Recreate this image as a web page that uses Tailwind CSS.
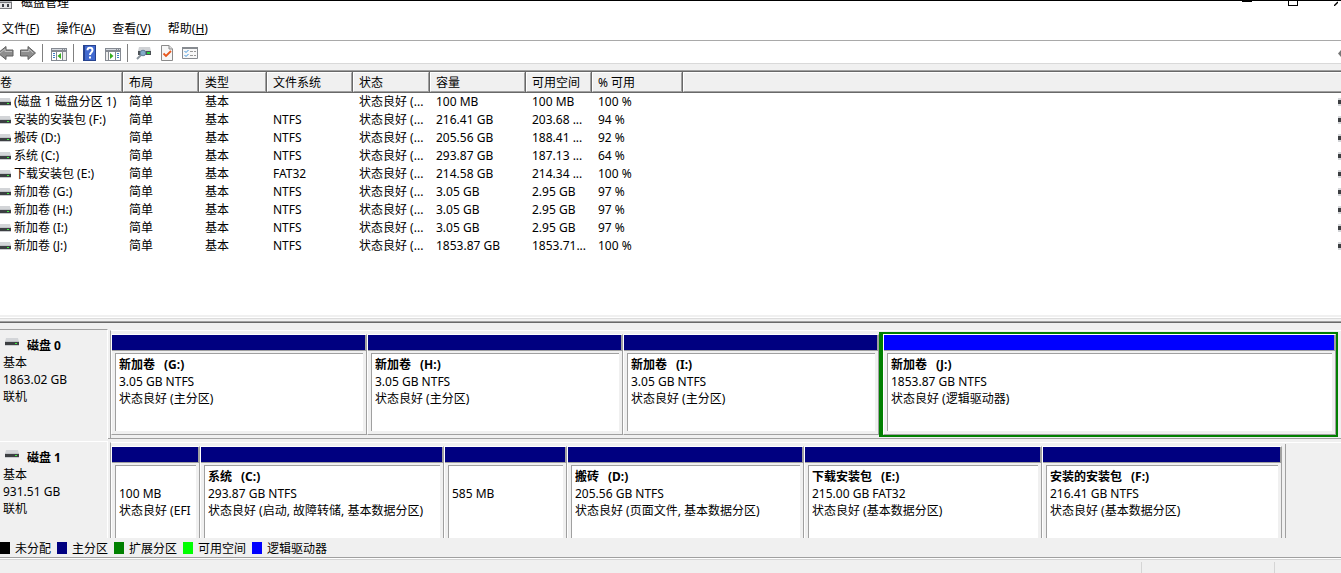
<!DOCTYPE html>
<html lang="zh-CN">
<head>
<meta charset="utf-8">
<title>磁盘管理</title>
<script src="https://cdn.jsdelivr.net/npm/@tailwindcss/browser@4"></script>
</head>
<body class="flex h-screen flex-col overflow-hidden bg-white font-['Noto_Sans','Noto_Sans_CJK_SC',sans-serif] text-[12px] leading-[17px] text-black">
<svg class="hidden" aria-hidden="true">
  <symbol id="drive" viewBox="0 0 14 8">
    <path d="M1 0h12l1 4H0z" fill="#d3d5d8"/><path d="M0 3h14v1H0z" fill="#bfc2c6"/>
    <path d="M0 4h14v3H0z" fill="#3c3f42"/><path d="M0 7h14v1H0z" fill="#c9cbce"/><path d="M10 5h2v1h-2z" fill="#3df03d"/>
  </symbol>
</svg>

<header class="flex h-[17px] shrink-0 items-start overflow-hidden border-t border-black">
  <svg class="h-2 w-3 shrink-0" viewBox="0 0 12 8" aria-hidden="true"><path d="M0 0h14v3H0z" fill="#b9bcc0"/><path d="M0 1h12v7H0z" fill="#77787c"/><path d="M0 2h11v5H0z" fill="#e4e4e6"/><path d="M2 3h2v3H2zM7 3h2v3H7z" fill="#3c3f46"/></svg>
  <h1 class="-mt-[7px] ml-[9px] grow">磁盘管理</h1>
  <button aria-label="最小化" class="mr-9 h-px w-[10px] bg-black"></button>
  <button aria-label="最大化" class="mr-9 h-[5px] w-[10px] border border-t-0 border-black"></button>
  <button aria-label="关闭" class="mr-[3px]"><svg class="h-[5px] w-[4px]" viewBox="0 0 4 5"><path d="M0 5L4 1" stroke="#000" stroke-width="1.3"/></svg></button>
</header>

<nav class="flex h-6 shrink-0 items-center gap-[17px] border-b border-[#a9a9a9] pl-[2px]">
  <button>文件(<u>F</u>)</button><button>操作(<u>A</u>)</button><button>查看(<u>V</u>)</button><button>帮助(<u>H</u>)</button>
</nav>

<div class="flex h-[23px] shrink-0 items-center border-b border-[#d9d9d9] pt-[2px]">
  <button aria-label="后退"><svg class="block h-4 w-[14px]" viewBox="0 0 14 16"><path d="M-2 8L6 1.5V5H13V11H6V14.500z" fill="#8e8e8e" stroke="#5f5f5f"/><path d="M0 8L5 4V6.500H12" fill="none" stroke="#bdbdbd"/></svg></button>
  <button aria-label="前进" class="ml-[6px]"><svg class="block h-4 w-4" viewBox="0 0 16 16"><path d="M.5 5H8V1.500L15.500 8L8 14.500V11H.5z" fill="#8e8e8e" stroke="#5f5f5f"/><path d="M1.500 6.500H9V4L13 8" fill="none" stroke="#bdbdbd"/></svg></button>
  <i class="ml-[6px] h-[18px] w-px bg-[#808080]"></i>
  <button aria-label="显示控制台树" class="ml-2 pt-[2px]"><svg class="block h-[13px] w-4" viewBox="0 0 16 13"><path d="M0 0h16v13H0z" fill="#858a92"/><path d="M1 1h10v1H1zM12 1h1v1h-1zM14 1h1v1h-1z" fill="#d4d8de"/><path d="M1 4h4v8H1zM6 4h5v8H6zM12 4h3v8h-3z" fill="#fff"/><path d="M2 5h2v1H2zM2 7h2v1H2zM2 9h2v1H2z" fill="#3d7fc8"/><path d="M10 5v6L6.500 8z" fill="#35ad1d"/><path d="M12 4h3v8h-3z" fill="#eee"/></svg></button>
  <i class="ml-[6px] h-[18px] w-px bg-[#808080]"></i>
  <button aria-label="帮助" class="ml-[9px]"><svg class="block h-4 w-[13px]" viewBox="0 0 13 16"><path d="M0 0h13v16H0z" fill="#27438f"/><path d="M2 1h10v14H2z" fill="#4169d0"/><path d="M4.500 5.200C4.500 2 9.500 2 9.500 5.200C9.500 7.200 7 7.200 7 10M7 11.500V13.500" fill="none" stroke="#fff" stroke-width="2"/></svg></button>
  <button aria-label="显示操作窗格" class="ml-[9px] pt-[2px]"><svg class="block h-[13px] w-4" viewBox="0 0 16 13"><path d="M0 0h16v13H0z" fill="#858a92"/><path d="M1 1h10v1H1zM12 1h1v1h-1zM14 1h1v1h-1z" fill="#d4d8de"/><path d="M1 4h2v8H1z" fill="#eee"/><path d="M4 4h6v8H4zM11 4h4v8h-4z" fill="#fff"/><path d="M12 5h2v1h-2zM12 7h2v1h-2zM12 9h2v1h-2z" fill="#3d7fc8"/><path d="M5 5v6L8.500 8z" fill="#35ad1d"/></svg></button>
  <i class="ml-[6px] h-[18px] w-px bg-[#808080]"></i>
  <button aria-label="重新扫描磁盘" class="ml-2"><svg class="block h-[14px] w-4" viewBox="0 0 16 14"><path d="M3 1h11l1 4H2z" fill="#d0d2d5"/><path d="M2 5h13v4H2z" fill="#4b5055"/><path d="M11 6h3v2h-3z" fill="#26d03d"/><path d="M1 13L5 9" stroke="#8a949c" stroke-width="2"/><circle cx="7" cy="7" r="2.800" fill="#83abc9" stroke="#62819a"/></svg></button>
  <button aria-label="属性" class="ml-[9px]"><svg class="block h-4 w-3" viewBox="0 0 12 16"><path d="M.5.5H8L11.500 4V15.500H.5z" fill="#f7f7f7" stroke="#8b8b8b"/><path d="M8 .5V4h3.500" fill="#ddd" stroke="#8b8b8b"/><path d="M2.500 8.500L5 11L10 6" fill="none" stroke="#e8571c" stroke-width="1.800"/></svg></button>
  <button aria-label="设置" class="ml-[9px]"><svg class="block h-3 w-4" viewBox="0 0 16 12"><path d="M.5 1h15v10.500H.5z" fill="#f8f8f8" stroke="#878b90"/><path d="M0 0h16v2H0z" fill="#878b90"/><path d="M2.500 4L4 5.500L6.500 3M2.500 8L4 9.500L6.500 7" fill="none" stroke="#3a93dc"/><path d="M8 4.500h3M12 4.500h2M8 8.500h3M12 8.500h2" stroke="#999"/></svg></button>
  <svg class="ml-auto h-[7px] w-[3px]" viewBox="0 0 3 7" aria-hidden="true"><path d="M0 3.500L3 0v7z" fill="#777"/></svg>
</div>

<main class="flex min-h-0 grow flex-col">
  <div class="h-[6px] shrink-0 bg-[#f0f0f0]"></div>
  <section class="h-[245px] shrink-0 overflow-hidden border-t border-[#a0a0a0]">
    <table class="w-full table-fixed border-separate border-spacing-0 border-t border-[#696969] text-left">
      <colgroup><col class="w-[123px]"><col class="w-[76px]"><col class="w-[68px]"><col class="w-[86px]"><col class="w-[77px]"><col class="w-[96px]"><col class="w-[66px]"><col class="w-[91px]"><col></colgroup>
      <thead><tr id="heads"></tr></thead>
      <tbody id="volumes" class="leading-4"></tbody>
    </table>
  </section>
  <div class="h-[6px] shrink-0 border-y-2 border-[#f0f0f0] bg-[#f0f0f0]"><div class="h-[2px] border-b border-[#dcdcdc] bg-white"></div></div>
  <section class="flex min-h-0 grow flex-col overflow-hidden border-t border-[#a0a0a0] bg-[#f0f0f0]">
    <div class="h-[7px] shrink-0 border-t border-[#696969]"></div>
    <div id="disks" class="min-h-0 grow overflow-hidden"></div>
  </section>
</main>

<ul class="flex h-5 shrink-0 items-center border-b border-[#a0a0a0] bg-[#f0f0f0]" id="legend"></ul>
<footer class="mt-px flex h-[14px] shrink-0 border-t border-[#d5d5d5] bg-[#f0f0f0] pt-[2px]">
  <span class="grow"></span><span class="w-[133px] border-l border-[#d5d5d5]"></span><span class="w-[67px] border-l border-[#d5d5d5]"></span>
</footer>

<script>
const heads = ['卷','布局','类型','文件系统','状态','容量','可用空间','% 可用',''];
document.getElementById('heads').innerHTML = heads.map((h, i) =>
  `<th scope="col" class="h-[21px] p-0 font-normal"><div class="flex h-[21px] items-center border-b border-[#696969] bg-[#f0f0f0] ${i < 8 ? 'border-r' : ''}"><div class="h-5 grow whitespace-nowrap border-l border-t border-b border-l-white border-t-white border-b-[#a0a0a0] pt-px ${i < 8 ? 'border-r border-r-[#a0a0a0]' : ''} ${i ? 'pl-[5px]' : 'border-l-0'}">${h}</div></div></th>`).join('');

const volumes = [
  ['(磁盘 1 磁盘分区 1)','','100 MB','100 MB','100 %'],
  ['安装的安装包 (F:)','NTFS','216.41 GB','203.68 ...','94 %'],
  ['搬砖 (D:)','NTFS','205.56 GB','188.41 ...','92 %'],
  ['系统 (C:)','NTFS','293.87 GB','187.13 ...','64 %'],
  ['下载安装包 (E:)','FAT32','214.58 GB','214.34 ...','100 %'],
  ['新加卷 (G:)','NTFS','3.05 GB','2.95 GB','97 %'],
  ['新加卷 (H:)','NTFS','3.05 GB','2.95 GB','97 %'],
  ['新加卷 (I:)','NTFS','3.05 GB','2.95 GB','97 %'],
  ['新加卷 (J:)','NTFS','1853.87 GB','1853.71...','100 %'],
];
document.getElementById('volumes').innerHTML = volumes.map(([n, fs, cap, free, pct]) => {
  const cells = ['简单','基本',fs,'状态良好 (...',cap,free,pct].map(t => `<td class="h-[18px] whitespace-nowrap p-0 pl-[6px]">${t}</td>`).join('');
  return `<tr><td class="h-[18px] p-0"><div class="flex h-[18px] items-center overflow-hidden whitespace-nowrap"><svg class="-ml-[3px] mr-[3px] h-2 w-[14px] shrink-0"><use href="#drive"/></svg>${n}</div></td>${cells}<td class="h-[18px] p-0"><div class="ml-auto h-2 w-[3px] border-y-2 border-[#d3d5d8] bg-[#3c3f42]"></div></td></tr>`;
}).join('');

const disks = [
  { name: '磁盘 0', size: '1863.02 GB', rest: 0, edge: 'border-t-[#a0a0a0]', parts: [
    ['新加卷','(G:)','3.05 GB NTFS','状态良好 (主分区)',256],
    ['新加卷','(H:)','3.05 GB NTFS','状态良好 (主分区)',256],
    ['新加卷','(I:)','3.05 GB NTFS','状态良好 (主分区)',256],
    ['新加卷','(J:)','1853.87 GB NTFS','状态良好 (逻辑驱动器)',459,true]] },
  { name: '磁盘 1', size: '931.51 GB', rest: 56, edge: 'border-t-white', parts: [
    ['','','100 MB','状态良好 (EFI',89],
    ['系统','(C:)','293.87 GB NTFS','状态良好 (启动, 故障转储, 基本数据分区)',244],
    ['','','585 MB','',123],
    ['搬砖','(D:)','205.56 GB NTFS','状态良好 (页面文件, 基本数据分区)',237],
    ['下载安装包','(E:)','215.00 GB FAT32','状态良好 (基本数据分区)',238],
    ['安装的安装包','(F:)','216.41 GB NTFS','状态良好 (基本数据分区)',240]] },
];
const part = ([n, l, size, st, w, logical]) => `
  <div class="flex min-w-0 basis-0" style="flex-grow:${w}">
   <div class="flex min-w-0 grow ${logical ? 'border-2 border-l-4 border-[#008000]' : 'py-[2px]'}">
    <div class="flex min-w-0 grow flex-col border-b border-l border-r border-t border-b-[#a0a0a0] border-l-white border-r-[#a0a0a0] border-t-white">
      <div class="h-4 shrink-0 border-b border-r border-[#a0a0a0] ${logical ? 'bg-[#0000ff]' : 'bg-[#000080]'}"></div>
      <div class="flex min-h-0 grow flex-col px-[3px] pb-[3px] pt-[2px]">
        <div class="h-[78px] overflow-hidden whitespace-nowrap border-l border-t border-[#a0a0a0] bg-white pl-[3px] pr-1 pt-[2px]">
          <div class="overflow-hidden">
            <p class="h-[17px] font-bold">${n}<span class="ml-[9px]">${l}</span></p><p>${size}</p><p>${st}</p>
          </div>
        </div>
      </div>
    </div>
   </div>
  </div>`;
document.getElementById('disks').innerHTML = disks.map(d => `
  <div class="mb-[2px] flex h-[110px]">
    <div class="w-[108px] shrink-0 border-r border-t border-r-white ${d.edge} pl-[3px] pt-[7px]">
      <p class="flex font-bold"><svg class="ml-[2px] mr-2 mt-px h-2 w-[14px]"><use href="#drive"/></svg>${d.name}</p><p>基本</p><p>${d.size}</p><p>联机</p>
    </div>
    <div class="flex min-w-0 grow border-b border-[#a0a0a0] pl-[2px] pt-[1px]">
      <div class="flex min-w-0 grow border-l border-t border-l-[#a0a0a0] border-t-white pb-px pr-[3px] pt-px">
        ${d.parts.map(part).join('')}
        ${d.rest ? `<div class="basis-0" style="flex-grow:${d.rest}"><div class="ml-[3px] h-full border-l border-[#a0a0a0]"></div></div>` : ''}
      </div>
    </div>
  </div>`).join('');

const legend = [['未分配','bg-black'],['主分区','bg-[#000080]'],['扩展分区','bg-[#008000]'],['可用空间','bg-[#00ff00]'],['逻辑驱动器','bg-[#0000ff]']];
document.getElementById('legend').innerHTML = legend.map(([t, c]) => `<li class="mr-[6px] flex items-center gap-[5px]"><i class="h-3 w-[10px] ${c}"></i><span class="pt-[2px]">${t}</span></li>`).join('');
</script>
</body>
</html>
